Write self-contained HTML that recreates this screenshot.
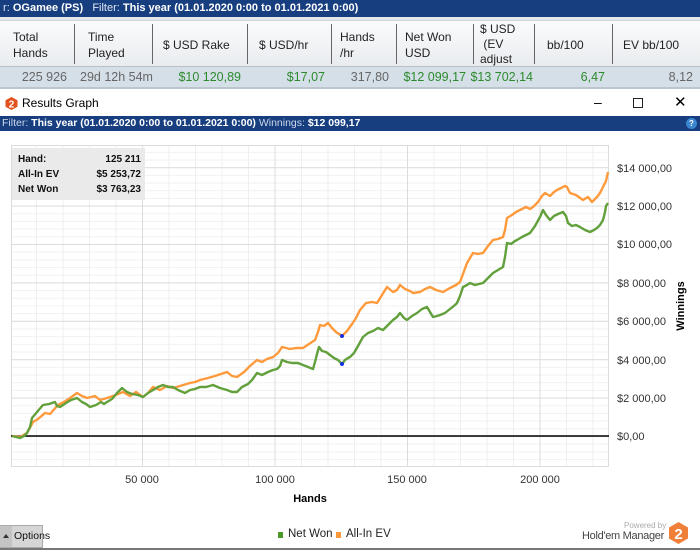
<!DOCTYPE html>
<html><head><meta charset="utf-8"><style>
*{margin:0;padding:0;box-sizing:border-box}
body{width:700px;height:550px;overflow:hidden;background:#fff;font-family:"Liberation Sans",sans-serif;position:relative}
.abs{position:absolute}
.top{left:0;top:0;width:700px;height:17px;background:#173f80;color:#dfe6f2;font-size:11px;line-height:17px;white-space:nowrap}
.top b{color:#fff}
.hdr{left:0;top:20px;width:700px;height:47px;background:linear-gradient(#fafbfc,#e9ecef);border-top:1px solid #cfd4da;border-bottom:1px solid #b8c0c8}
.hdr div{position:absolute;top:0;height:47px;font-size:12px;color:#222;display:flex;align-items:center;line-height:16px}
.sep{position:absolute;top:3px;width:1px;height:40px;background:#666}
.row{left:0;top:67px;width:700px;height:22px;background:#d5dfe8;border-bottom:2px solid #bcc4cc;font-size:12.5px;line-height:21px;color:#666}
.row span{position:absolute;top:0;white-space:nowrap}
.g{color:#2c8a2c}
.title{left:0;top:91px;width:700px;height:24px;background:#fff;font-size:12px;line-height:24px}
.filter{left:0;top:116px;width:700px;height:15px;background:#173f80;color:#cfd9ea;font-size:10.5px;line-height:15px;padding-left:2px;white-space:nowrap}
.filter b{color:#fff}
.bot{left:0;top:521px;width:700px;height:29px;background:#fff}
</style></head><body>
<div class="abs top">&nbsp;r: <b>OGamee (PS)</b>&nbsp;&nbsp; Filter: <b>This year (01.01.2020 0:00 to 01.01.2021 0:00)</b></div>
<div class="abs" style="left:0;top:17px;width:700px;height:3px;background:#e4e7ea"></div>
<div class="abs hdr">
<div style="left:13px">Total<br>Hands</div><span class="sep" style="left:74px"></span>
<div style="left:88px">Time<br>Played</div><span class="sep" style="left:152px"></span>
<div style="left:163px">$ USD Rake</div><span class="sep" style="left:247px"></span>
<div style="left:259px">$ USD/hr</div><span class="sep" style="left:331px"></span>
<div style="left:340px">Hands<br>/hr</div><span class="sep" style="left:396px"></span>
<div style="left:405px">Net Won<br>USD</div><span class="sep" style="left:473px"></span>
<div style="left:480px;line-height:15px">$ USD<br>&nbsp;(EV<br>adjust</div><span class="sep" style="left:534px"></span>
<div style="left:547px">bb/100</div><span class="sep" style="left:612px"></span>
<div style="left:623px">EV bb/100</div>
</div>
<div class="abs row">
<span style="right:633px">225 926</span>
<span style="left:80px">29d 12h 54m</span>
<span class="g" style="right:459px">$10 120,89</span>
<span class="g" style="right:375px">$17,07</span>
<span style="right:311px">317,80</span>
<span class="g" style="right:234px">$12 099,17</span>
<span class="g" style="right:167px">$13 702,14</span>
<span class="g" style="right:95px">6,47</span>
<span style="right:7px">8,12</span>
</div>
<div class="abs title">
<svg class="abs" style="left:5px;top:6px" width="13" height="13" viewBox="0 0 13 13"><polygon points="6.5,0 12.5,3.3 12.5,9.7 6.5,13 0.5,9.7 0.5,3.3" fill="#e2521f"/><text x="6.5" y="10.5" font-size="10" font-weight="bold" fill="#fff" text-anchor="middle" font-family="Liberation Sans">2</text></svg>
<span class="abs" style="left:22px;top:0">Results Graph</span>
<span class="abs" style="left:594px;top:-1px;font-size:14px">&#8211;</span>
<span class="abs" style="left:633px;top:7px;width:10px;height:10px;border:1px solid #222"></span>
<span class="abs" style="left:674px;top:0;font-size:15px">&#10005;</span>
</div>
<div class="abs filter">Filter: <b>This year (01.01.2020 0:00 to 01.01.2021 0:00)</b> Winnings: <b>$12 099,17</b>
<span class="abs" style="right:3px;top:2px;width:11px;height:11px;border-radius:50%;background:#3a86d0;color:#fff;font-size:8px;line-height:11px;text-align:center;font-weight:bold">?</span></div>

<svg class="abs" style="left:0;top:131px" width="700" height="390" viewBox="0 131 700 390">
<defs>
<pattern id="hm" patternUnits="userSpaceOnUse" x="0" y="436" width="700" height="7.68"><line x1="0" y1="0.5" x2="700" y2="0.5" stroke="#f1f1f1" stroke-width="1"/></pattern>
<pattern id="vm" patternUnits="userSpaceOnUse" x="9.5" y="0" width="26.5" height="600"><line x1="0.5" y1="0" x2="0.5" y2="600" stroke="#efefef" stroke-width="1"/></pattern>
<pattern id="hM" patternUnits="userSpaceOnUse" x="0" y="436" width="700" height="38.4"><line x1="0" y1="0.5" x2="700" y2="0.5" stroke="#dcdcdc" stroke-width="1"/></pattern>
<pattern id="vM" patternUnits="userSpaceOnUse" x="9.5" y="0" width="132.5" height="600"><line x1="0.5" y1="0" x2="0.5" y2="600" stroke="#dcdcdc" stroke-width="1"/></pattern>
</defs>
<rect x="11" y="145" width="598" height="322" fill="url(#hm)"/>
<rect x="11" y="145" width="598" height="322" fill="url(#vm)"/>
<rect x="11" y="145" width="598" height="322" fill="url(#hM)"/>
<rect x="11" y="145" width="598" height="322" fill="url(#vM)"/>
<rect x="11.5" y="145.5" width="597" height="321" fill="none" stroke="#dcdcdc"/>
<line x1="11" y1="436" x2="609" y2="436" stroke="#000" stroke-width="1.6"/>
<g fill="none" stroke-width="2.4" stroke-linejoin="round">
<polyline stroke="#ff9a3c" points="12,436 20,437 27,433 33,422 38,419 45,413 50,414 58,405 64,402 70,398 77,393 82,396 87,398 95,396 100,400 107,398 113,396 118,394 123,392 130,396 136,392 143,397 148,393 153,387 160,390 167,386 173,388 180,386 190,383 195,382 200,380 208,378 215,376 221,374 227,372 232,376 237,377 244,372 250,366 257,360 262,362 267,359 273,357 278,353 282,347 290,349 296,348 303,348 309,344 315,340 318,332 320,325 324,326 328,323 332,328 336,332 342,336 347,331 352,324 356,318 360,310 366,303 372,302 377,303 382,295 387,287 393,292 397,290 400,285 405,289 410,291 413,293 420,292 425,289 430,287 436,290 443,292 450,288 456,285 460,282 463,274 467,263 470,258 473,253 478,254 483,253 488,246 493,240 498,239 503,237 505,230 507,218 512,215 516,212 520,210 526,207 530,209 533,207 538,202 542,196 545,193 550,196 554,192 557,190 561,188 565,186 567,187 570,193 576,195 583,200 588,197 592,202 597,197 600,193 603,187 606,181 608,172"/>
<polyline stroke="#62a03c" points="12,436 16,437 20,438 24,436 27,433 30,427 32,418 37,412 43,405 49,404 55,402 57,406 60,407 66,403 71,400 77,398 82,402 86,404 90,407 96,405 101,402 104,404 107,402 112,399 117,393 122,388 127,392 132,394 138,395 143,397 148,393 153,390 158,387 163,385 168,387 173,387 178,390 185,393 190,390 195,389 200,387 206,387 213,385 220,388 227,390 232,392 237,392 242,387 248,384 252,380 257,373 262,375 268,372 273,370 277,369 280,366 282,360 287,362 292,363 298,363 303,365 308,367 313,369 315,362 317,354 319,347 322,351 326,352 330,355 334,358 338,360 342,364 345,360 348,358 350,357 354,353 358,346 363,337 368,333 373,331 378,328 383,330 388,325 393,320 397,317 400,313 404,318 407,320 412,316 417,313 422,309 427,307 430,312 433,317 437,316 440,315 445,313 450,309 455,305 457,303 460,296 463,287 467,285 470,283 475,285 479,284 483,283 488,278 493,273 498,270 503,267 505,257 507,243 511,244 515,241 517,240 522,237 526,235 530,233 535,226 540,217 543,210 546,215 550,220 554,216 558,214 563,212 566,216 568,223 572,226 576,225 580,227 585,230 590,232 594,230 597,228 600,225 603,220 605,212 606,206 608,203"/>
</g>
<circle cx="342" cy="336" r="2" fill="#1530e0"/>
<circle cx="342" cy="364" r="2" fill="#1530e0"/>
<rect x="12" y="148" width="133" height="52" fill="#e9e9e9" opacity="0.95"/>
<g font-family="Liberation Sans" font-size="10" font-weight="bold" fill="#111">
<text x="18" y="162">Hand:</text><text x="141" y="162" text-anchor="end">125 211</text>
<text x="18" y="177">All-In EV</text><text x="141" y="177" text-anchor="end">$5 253,72</text>
<text x="18" y="192">Net Won</text><text x="141" y="192" text-anchor="end">$3 763,23</text>
</g>
<g font-family="Liberation Sans" font-size="11" fill="#333">
<text x="617" y="172">$14 000,00</text>
<text x="617" y="210">$12 000,00</text>
<text x="617" y="248">$10 000,00</text>
<text x="617" y="287">$8 000,00</text>
<text x="617" y="325">$6 000,00</text>
<text x="617" y="364">$4 000,00</text>
<text x="617" y="402">$2 000,00</text>
<text x="617" y="440">$0,00</text>
<text x="142" y="483" text-anchor="middle">50 000</text>
<text x="275" y="483" text-anchor="middle">100 000</text>
<text x="407" y="483" text-anchor="middle">150 000</text>
<text x="540" y="483" text-anchor="middle">200 000</text>
</g>
<text x="310" y="502" text-anchor="middle" font-family="Liberation Sans" font-size="11" font-weight="bold">Hands</text>
<text transform="translate(684,306) rotate(-90)" text-anchor="middle" font-family="Liberation Sans" font-size="11" font-weight="bold">Winnings</text>
</svg>

<div class="abs bot">
<div class="abs" style="left:0;top:4px;width:43px;height:23px;background:#d6d6d6;border:1px solid #aaa;border-left:none"></div>
<span class="abs" style="left:0;top:5px;width:12px;height:21px;background:#c4c4c4"></span>
<span class="abs" style="left:3px;top:13px;width:0;height:0;border-left:3px solid transparent;border-right:3px solid transparent;border-bottom:4px solid #333"></span>
<span class="abs" style="left:14px;top:9px;font-size:10.5px;color:#111">Options</span>
<span class="abs" style="left:278px;top:11px;width:5px;height:6px;background:#4a9a2a"></span>
<span class="abs" style="left:288px;top:7px;font-size:11.5px;color:#222">Net Won</span>
<span class="abs" style="left:336px;top:11px;width:5px;height:6px;background:#ff9a3c"></span>
<span class="abs" style="left:346px;top:7px;font-size:11.5px;color:#222">All-In EV</span>
<span class="abs" style="left:624px;top:0;font-size:8px;color:#aaa">Powered by</span>
<span class="abs" style="left:582px;top:9px;font-size:11px;letter-spacing:-0.3px;color:#444">Hold'em Manager</span>
<svg class="abs" style="left:669px;top:1px" width="19" height="22" viewBox="0 0 19 22"><polygon points="9.5,0 19,5.5 19,16.5 9.5,22 0,16.5 0,5.5" fill="#f07f3a"/><text x="9.5" y="17" font-size="15" font-weight="bold" fill="#fff" text-anchor="middle" font-family="Liberation Sans">2</text></svg>
<div class="abs" style="left:0;top:27px;width:700px;height:2px;background:#777"></div>
</div>
</body></html>
